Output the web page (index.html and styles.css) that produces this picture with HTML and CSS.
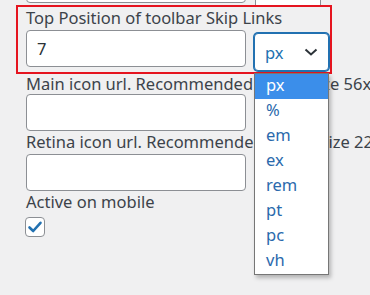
FILE: index.html
```html
<!DOCTYPE html>
<html>
<head>
<meta charset="utf-8">
<link rel="stylesheet" href="styles.css">
</head>
<body>
<div class="page">
  <div class="stub">
    <div class="box box-input"></div>
    <div class="box box-select"></div>
  </div>
  <div class="highlight">
    <div class="label">Top Position of toolbar Skip Links</div>
    <div class="row">
      <div class="input">7</div>
      <div class="select">
        <span class="select-value">px</span>
        <svg class="chev" width="14" height="8" viewBox="0 0 14 8"><path d="M1.5 1.5 L7 6.5 L12.5 1.5" fill="none" stroke="#2c3338" stroke-width="2"/></svg>
      </div>
    </div>
  </div>
  <div class="field first">
    <div class="label">Main icon url. Recommended image size 56x56</div>
    <div class="input"></div>
  </div>
  <div class="field">
    <div class="label">Retina icon url. Recommended image size 224x224</div>
    <div class="input"></div>
  </div>
  <div class="field">
    <div class="label">Active on mobile</div>
    <div class="checkbox">
      <svg width="16" height="14" viewBox="0 0 16 14"><path d="M2.5 7.5 L6.2 11 L13.5 2.8" fill="none" stroke="#2271b1" stroke-width="2.6" stroke-linecap="round" stroke-linejoin="round"/></svg>
    </div>
  </div>
  <ul class="dropdown">
    <li class="opt selected">px</li>
    <li class="opt">%</li>
    <li class="opt">em</li>
    <li class="opt">ex</li>
    <li class="opt">rem</li>
    <li class="opt">pt</li>
    <li class="opt">pc</li>
    <li class="opt">vh</li>
  </ul>
</div>
</body>
</html>
```

FILE: styles.css
```css
html, body {
  margin: 0;
  padding: 0;
  background: #f0f0f1;
}
body {
  font-family: "Noto Sans", "Open Sans", sans-serif;
  font-size: 16.5px;
  color: #3c434a;
  width: 370px;
  height: 295px;
  overflow: hidden;
}
.page {
  position: relative;
  height: 295px;
  white-space: nowrap;
}
.stub {
  display: flex;
  align-items: flex-end;
  gap: 9px;
  height: 5px;
  overflow: hidden;
  padding-left: 26px;
}
.box {
  flex: none;
  box-sizing: border-box;
  height: 30px;
  background: #fff;
  border: 1px solid #8c8f94;
  border-radius: 4px;
}
.box-input { width: 220px; margin-bottom: 2px; }
.box-select { width: 66px; margin-bottom: -4px; }
.highlight {
  box-sizing: border-box;
  margin-left: 16px;
  width: 316px;
  height: 69px;
  border: 2px solid #e5141f;
  padding-left: 8px;
}
.label {
  height: 23px;
  line-height: 22px;
}
.row {
  display: flex;
  align-items: flex-start;
  gap: 8px;
}
.input {
  box-sizing: border-box;
  width: 220px;
  height: 37px;
  background: #fff;
  border: 1px solid #8c8f94;
  border-radius: 4px;
  padding-left: 10px;
  line-height: 35px;
  color: #2c3338;
}
.select {
  box-sizing: border-box;
  width: 75px;
  height: 38px;
  margin-top: 3px;
  background: #fff;
  border: 1px solid #2271b1;
  border-radius: 4px;
  box-shadow: 0 0 0 1px #2271b1;
  display: flex;
  align-items: center;
  justify-content: space-between;
  padding: 0 10px 0 10px;
  color: #2271b1;
}
.chev { display: block; }
.field.first .label { height: 20px; line-height: 19px; }
.field { padding-left: 26px; }
.checkbox {
  box-sizing: border-box;
  width: 20px;
  height: 20px;
  margin-top: 3px;
  margin-left: -1px;
  background: #fff;
  border: 1px solid #8c8f94;
  border-radius: 4px;
  display: flex;
  align-items: center;
  justify-content: center;
}
.dropdown {
  position: absolute;
  left: 254px;
  top: 73px;
  width: 75px;
  box-sizing: border-box;
  margin: 0;
  padding: 0;
  list-style: none;
  background: #fff;
  border: 1px solid #767676;
  box-shadow: 2px 3px 4px rgba(0,0,0,0.25);
}
.opt {
  height: 25px;
  line-height: 22px;
  padding-left: 11px;
  color: #2a69ac;
}
.opt.selected {
  background: #3b8eea;
  color: #fff;
}
```
